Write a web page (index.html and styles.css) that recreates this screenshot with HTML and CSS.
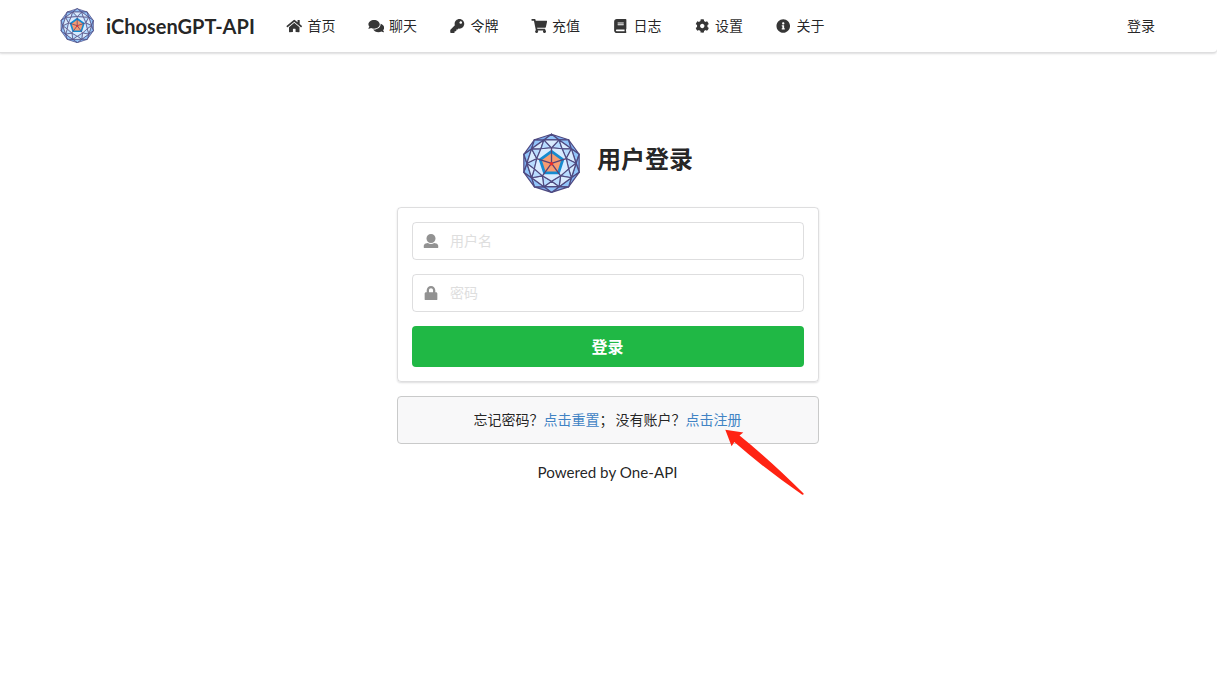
FILE: index.html
```html
<!DOCTYPE html>
<html lang="zh-CN">
<head>
<meta charset="utf-8">
<title>iChosenGPT-API</title>
<link rel="stylesheet" href="styles.css">
</head>
<body>
<svg class="defs" width="0" height="0" aria-hidden="true">
  <symbol id="logo" viewBox="0 0 60 60"><g id="logo-art"></g></symbol>
</svg>
<header class="navbar">
  <div class="navbar-inner">
    <a class="brand"><svg class="brand-logo"><use href="#logo"/></svg><span class="brand-name">iChosenGPT-API</span></a>
    <nav class="menu">
      <a class="item"><svg class="icon" viewBox="0 0 576 512"><path d="M280.37 148.26L96 300.11V464a16 16 0 0 0 16 16l112.06-.29a16 16 0 0 0 15.92-16V368a16 16 0 0 1 16-16h64a16 16 0 0 1 16 16v95.64a16 16 0 0 0 16 16.05L464 480a16 16 0 0 0 16-16V300L295.67 148.26a12.19 12.19 0 0 0-15.3 0zM571.6 251.47L488 182.56V44.05a12 12 0 0 0-12-12h-56a12 12 0 0 0-12 12v72.61L318.47 43a48 48 0 0 0-61 0L4.34 251.47a12 12 0 0 0-1.6 16.9l25.5 31A12 12 0 0 0 45.15 301l235.22-193.74a12.19 12.19 0 0 1 15.3 0L530.9 301a12 12 0 0 0 16.9-1.6l25.5-31a12 12 0 0 0-1.7-16.93z"/></svg>首页</a>
      <a class="item"><svg class="icon" viewBox="0 0 576 512"><path d="M416 192c0-88.4-93.1-160-208-160S0 103.6 0 192c0 34.3 14.1 65.9 38 92-13.4 30.2-35.5 54.2-35.8 54.5-2.2 2.3-2.8 5.7-1.5 8.7S4.800 352 8 352c36.600 0 66.900-12.300 88.700-25 32.200 15.700 70.300 25 111.300 25 114.900 0 208-71.600 208-160zm122 220c23.900-26 38-57.700 38-92 0-66.900-53.500-124.200-129.300-148.100.9 6.600 1.300 13.300 1.300 20.100 0 105.900-107.700 192-240 192-10.800 0-21.300-.8-31.700-1.900C207.800 439.600 281.800 480 368 480c41 0 79.100-9.200 111.300-25 21.800 12.700 52.100 25 88.700 25 3.200 0 6.100-1.900 7.300-4.800 1.300-2.900.7-6.300-1.500-8.700-.3-.3-22.400-24.200-35.800-54.500z"/></svg>聊天</a>
      <a class="item"><svg class="icon" viewBox="0 0 512 512"><path d="M512 176.001C512 273.203 433.202 352 336 352c-11.220 0-22.190-1.062-32.827-3.069l-24.012 27.014A23.999 23.999 0 0 1 261.223 384H224v40c0 13.255-10.745 24-24 24h-40v40c0 13.255-10.745 24-24 24H24c-13.255 0-24-10.745-24-24v-78.059c0-6.365 2.529-12.470 7.029-16.971l161.802-161.802C163.108 213.814 160 195.271 160 176 160 78.798 238.797.001 335.999 0 433.488-.001 512 78.511 512 176.001zM336 128c0 26.510 21.490 48 48 48s48-21.490 48-48-21.490-48-48-48-48 21.490-48 48z"/></svg>令牌</a>
      <a class="item"><svg class="icon" viewBox="0 0 576 512"><path d="M528.120 301.319l47.273-208C578.806 78.301 567.391 64 551.990 64H159.208l-9.166-44.810C147.758 8.021 137.930 0 126.529 0H24C10.745 0 0 10.745 0 24v16c0 13.255 10.745 24 24 24h69.883l70.248 343.435C147.325 417.100 136 435.222 136 456c0 30.928 25.072 56 56 56s56-25.072 56-56c0-15.674-6.447-29.835-16.824-40h209.647C430.447 426.165 424 440.326 424 456c0 30.928 25.072 56 56 56s56-25.072 56-56c0-22.172-12.888-41.332-31.579-50.405l5.517-24.276c3.413-15.018-8.002-29.319-23.403-29.319H218.117l-6.545-32h293.145c11.206 0 20.920-7.754 23.403-18.681z"/></svg>充值</a>
      <a class="item"><svg class="icon" viewBox="0 0 448 512"><path d="M448 360V24c0-13.300-10.700-24-24-24H96C43 0 0 43 0 96v320c0 53 43 96 96 96h328c13.300 0 24-10.700 24-24v-16c0-7.500-3.500-14.300-8.900-18.700-4.200-15.400-4.200-59.300 0-74.700 5.400-4.300 8.900-11.100 8.900-18.600zM128 134c0-3.300 2.700-6 6-6h212c3.300 0 6 2.700 6 6v20c0 3.300-2.700 6-6 6H134c-3.300 0-6-2.700-6-6v-20zm0 64c0-3.300 2.700-6 6-6h212c3.300 0 6 2.700 6 6v20c0 3.300-2.700 6-6 6H134c-3.300 0-6-2.700-6-6v-20zm253.400 250H96c-17.700 0-32-14.300-32-32 0-17.600 14.400-32 32-32h285.400c-1.900 17.100-1.900 46.900 0 64z"/></svg>日志</a>
      <a class="item"><svg class="icon" viewBox="0 0 512 512"><path d="M487.400 315.700l-42.600-24.600c4.300-23.200 4.300-47 0-70.200l42.600-24.600c4.900-2.800 7.100-8.600 5.500-14-11.100-35.600-30-67.800-54.700-94.600-3.800-4.100-10-5.100-14.800-2.300L380.800 110c-17.900-15.400-38.500-27.300-60.800-35.100V25.800c0-5.600-3.900-10.500-9.400-11.700-36.700-8.200-74.300-7.800-109.200 0-5.500 1.200-9.400 6.100-9.400 11.700V75c-22.200 7.900-42.800 19.800-60.800 35.100L88.700 85.500c-4.900-2.800-11-1.900-14.800 2.300-24.700 26.700-43.600 58.900-54.700 94.600-1.700 5.400.6 11.200 5.500 14L67.300 221c-4.300 23.200-4.300 47 0 70.200l-42.600 24.600c-4.900 2.800-7.100 8.600-5.500 14 11.100 35.600 30 67.800 54.700 94.600 3.800 4.100 10 5.100 14.800 2.300l42.600-24.600c17.900 15.400 38.500 27.300 60.800 35.100v49.200c0 5.600 3.900 10.500 9.400 11.700 36.700 8.200 74.300 7.800 109.200 0 5.500-1.200 9.400-6.100 9.400-11.700v-49.200c22.200-7.900 42.800-19.800 60.800-35.100l42.600 24.600c4.900 2.800 11 1.900 14.800-2.300 24.700-26.700 43.600-58.900 54.700-94.600 1.500-5.500-.7-11.300-5.600-14.100zM256 336c-44.100 0-80-35.900-80-80s35.900-80 80-80 80 35.900 80 80-35.900 80-80 80z"/></svg>设置</a>
      <a class="item"><svg class="icon" viewBox="0 0 512 512"><path d="M256 8C119.043 8 8 119.083 8 256c0 136.997 111.043 248 248 248s248-111.003 248-248C504 119.083 392.957 8 256 8zm0 110c23.196 0 42 18.804 42 42s-18.804 42-42 42-42-18.804-42-42 18.804-42 42-42zm56 254c0 6.627-5.373 12-12 12h-88c-6.627 0-12-5.373-12-12v-24c0-6.627 5.373-12 12-12h12v-64h-12c-6.627 0-12-5.373-12-12v-24c0-6.627 5.373-12 12-12h64c6.627 0 12 5.373 12 12v100h12c6.627 0 12 5.373 12 12v24z"/></svg>关于</a>
    </nav>
    <a class="login-link">登录</a>
  </div>
</header>
<main class="login">
  <h2 class="title"><svg class="title-logo"><use href="#logo"/></svg><span>用户登录</span></h2>
  <form class="card">
    <label class="field"><svg class="field-icon" viewBox="0 0 512 512"><path d="M256 0c88.366 0 160 71.634 160 160s-71.634 160-160 160S96 248.366 96 160 167.634 0 256 0zm183.283 333.821l-71.313-17.828c-74.923 53.890-165.738 41.864-223.940 0l-71.313 17.828C29.981 344.505 0 382.903 0 426.955V464c0 26.510 21.490 48 48 48h416c26.510 0 48-21.490 48-48v-37.045c0-44.052-29.981-82.450-72.717-93.134z"/></svg><input class="input" type="text" placeholder="用户名"></label>
    <label class="field"><svg class="field-icon" viewBox="0 0 448 512"><path d="M400 224h-24v-72C376 68.200 307.800 0 224 0S72 68.200 72 152v72H48c-26.500 0-48 21.500-48 48v192c0 26.500 21.500 48 48 48h352c26.500 0 48-21.500 48-48V272c0-26.500-21.500-48-48-48zm-104 0H152v-72c0-39.700 32.300-72 72-72s72 32.300 72 72v72z"/></svg><input class="input" type="password" placeholder="密码"></label>
    <button class="submit" type="button">登录</button>
  </form>
  <div class="message"><span>忘记密码？</span><a class="link">点击重置</a><span>；</span><span class="ask">没有账户？</span><a class="link">点击注册</a></div>
  <footer class="footer">Powered by One-API</footer>
</main>
<svg class="arrow" viewBox="0 0 80 68"><path d="M0.300 -.2L18.300 2.500L14.500 5.500Q45 30 78.600 63.500Q79 65 77.300 64.800Q40 39 9.300 12L6.600 16.200Z"/></svg>
<script src="logo.js"></script>
</body>
</html>
```
FILE: styles.css
```css
* { box-sizing: border-box; }
body {
  margin: 0;
  background: #fff;
  color: rgba(0, 0, 0, .87);
  font: 14px/20px Lato, "Noto Sans CJK SC", sans-serif;
}
.defs { display: block; }
.navbar {
  height: 53px;
  border: 1px solid rgba(34, 36, 38, .15);
  border-width: 0 0 1px;
  border-radius: 0 0 4px 0;
  box-shadow: 0 1px 2px rgba(34, 36, 38, .15);
}
.navbar-inner {
  display: flex;
  align-items: center;
  height: 51px;
  padding: 0 62px 0 60px;
}
.brand { display: flex; align-items: center; width: 210px; }
.brand-logo { width: 35px; height: 35px; margin-right: 11px; }
.brand-name { font-size: 20px; font-weight: 700; white-space: nowrap; }
.menu { display: flex; }
.item { display: flex; align-items: center; padding: 0 16px; white-space: nowrap; }
.icon { width: 16.500px; height: 14px; margin-right: 5px; fill: currentColor; opacity: .9; }
.login-link { margin-left: auto; }
.login { width: 422px; margin: 80px auto 0 397px; }
.title {
  display: flex;
  justify-content: center;
  align-items: center;
  height: 60px;
  margin: 0 0 14px;
  padding-right: 1px;
  font-size: 24px;
  line-height: 31px;
}
.title-logo { width: 60px; height: 60px; margin-right: 15px; }
.title span { margin-bottom: 9px; }
.card {
  display: grid;
  gap: 14px;
  padding: 14px;
  border: 1px solid rgba(34, 36, 38, .15);
  border-radius: 4px;
  box-shadow: 0 1px 2px rgba(34, 36, 38, .15);
}
.field {
  display: flex;
  align-items: center;
  height: 38px;
  border: 1px solid rgba(34, 36, 38, .15);
  border-radius: 4px;
}
.field-icon { width: 16px; height: 14.500px; margin: 0 11px 0 10px; fill: #929292; }
.input {
  flex: 1;
  padding: 0;
  border: 0;
  outline: 0;
  font: inherit;
  background: none;
}
.input::placeholder { color: #dedede; }
.submit {
  height: 41px;
  padding: 0 1px 0 0;
  border: 0;
  border-radius: 4px;
  background: #20b845;
  color: #fff;
  font: 700 16px/20px Lato, "Noto Sans CJK SC", sans-serif;
}
.message {
  display: flex;
  justify-content: center;
  align-items: center;
  height: 48px;
  margin-top: 14px;
  padding-right: 1px;
  border: 1px solid #c9caca;
  border-radius: 4px;
  background: #f8f8f9;
}
.ask { margin-left: 2px; }
.link { color: #4183c4; }
.footer { margin-top: 18px; padding-right: 1px; text-align: center; font-size: 15.200px; }
.arrow { position: absolute; left: 725px; top: 430px; width: 80px; height: 68px; overflow: visible; fill: #ff2313; }
```
FILE: logo.js
```js
// Builds the faceted decagon emblem from concentric rings of points.
const C = 30;
const pt = (r, deg) => {
  const a = (deg - 90) * Math.PI / 180;
  return [(C + r * Math.cos(a)).toFixed(2), (C + r * Math.sin(a)).toFixed(2)];
};
const ring = (r, n, start) => Array.from({ length: n }, (_, i) => pt(r, start + i * 360 / n));
const poly = (pts, fill, stroke, w) =>
  `<polygon points="${pts.map(p => p.join(',')).join(' ')}" fill="${fill}" stroke="${stroke}" stroke-width="${w}" stroke-linejoin="round"/>`;
const ink = '#4f4a80';
const outer = ring(29.1, 10, 0);
const mid = ring(24.6, 10, 18);
const inner = Array.from({ length: 10 }, (_, i) => pt(i % 2 ? 18 : 15.5, i * 36));
let art = '';
for (let i = 0; i < 10; i++) {
  const n = (i + 1) % 10;
  art += poly([outer[i], outer[n], mid[i]], '#7fb0f2', ink, 1.2);
  art += poly([outer[n], mid[i], mid[n]], '#92c5fa', ink, 1.2);
  art += poly([mid[i], inner[i], inner[n]], '#b8dcff', ink, 1.2);
  art += poly([mid[i], mid[n], inner[n]], '#d9ebfe', ink, 1.2);
}
art += poly(inner, '#d9ebff', ink, 1.1);
const core = ring(11.9, 5, 0);
art += poly(core, '#f79b70', '#168bd0', 2.8);
for (let i = 0; i < 5; i++) {
  art += `<path d="M${inner[i * 2]}L30 30" stroke="#5a4374" stroke-width="1.3"/>`;
}
art += '<circle cx="30" cy="30.5" r="1.8" fill="#e92c2c"/>';
document.getElementById('logo-art').innerHTML =
  `<g transform="translate(-.5 .3)">${art}</g>`;
```
